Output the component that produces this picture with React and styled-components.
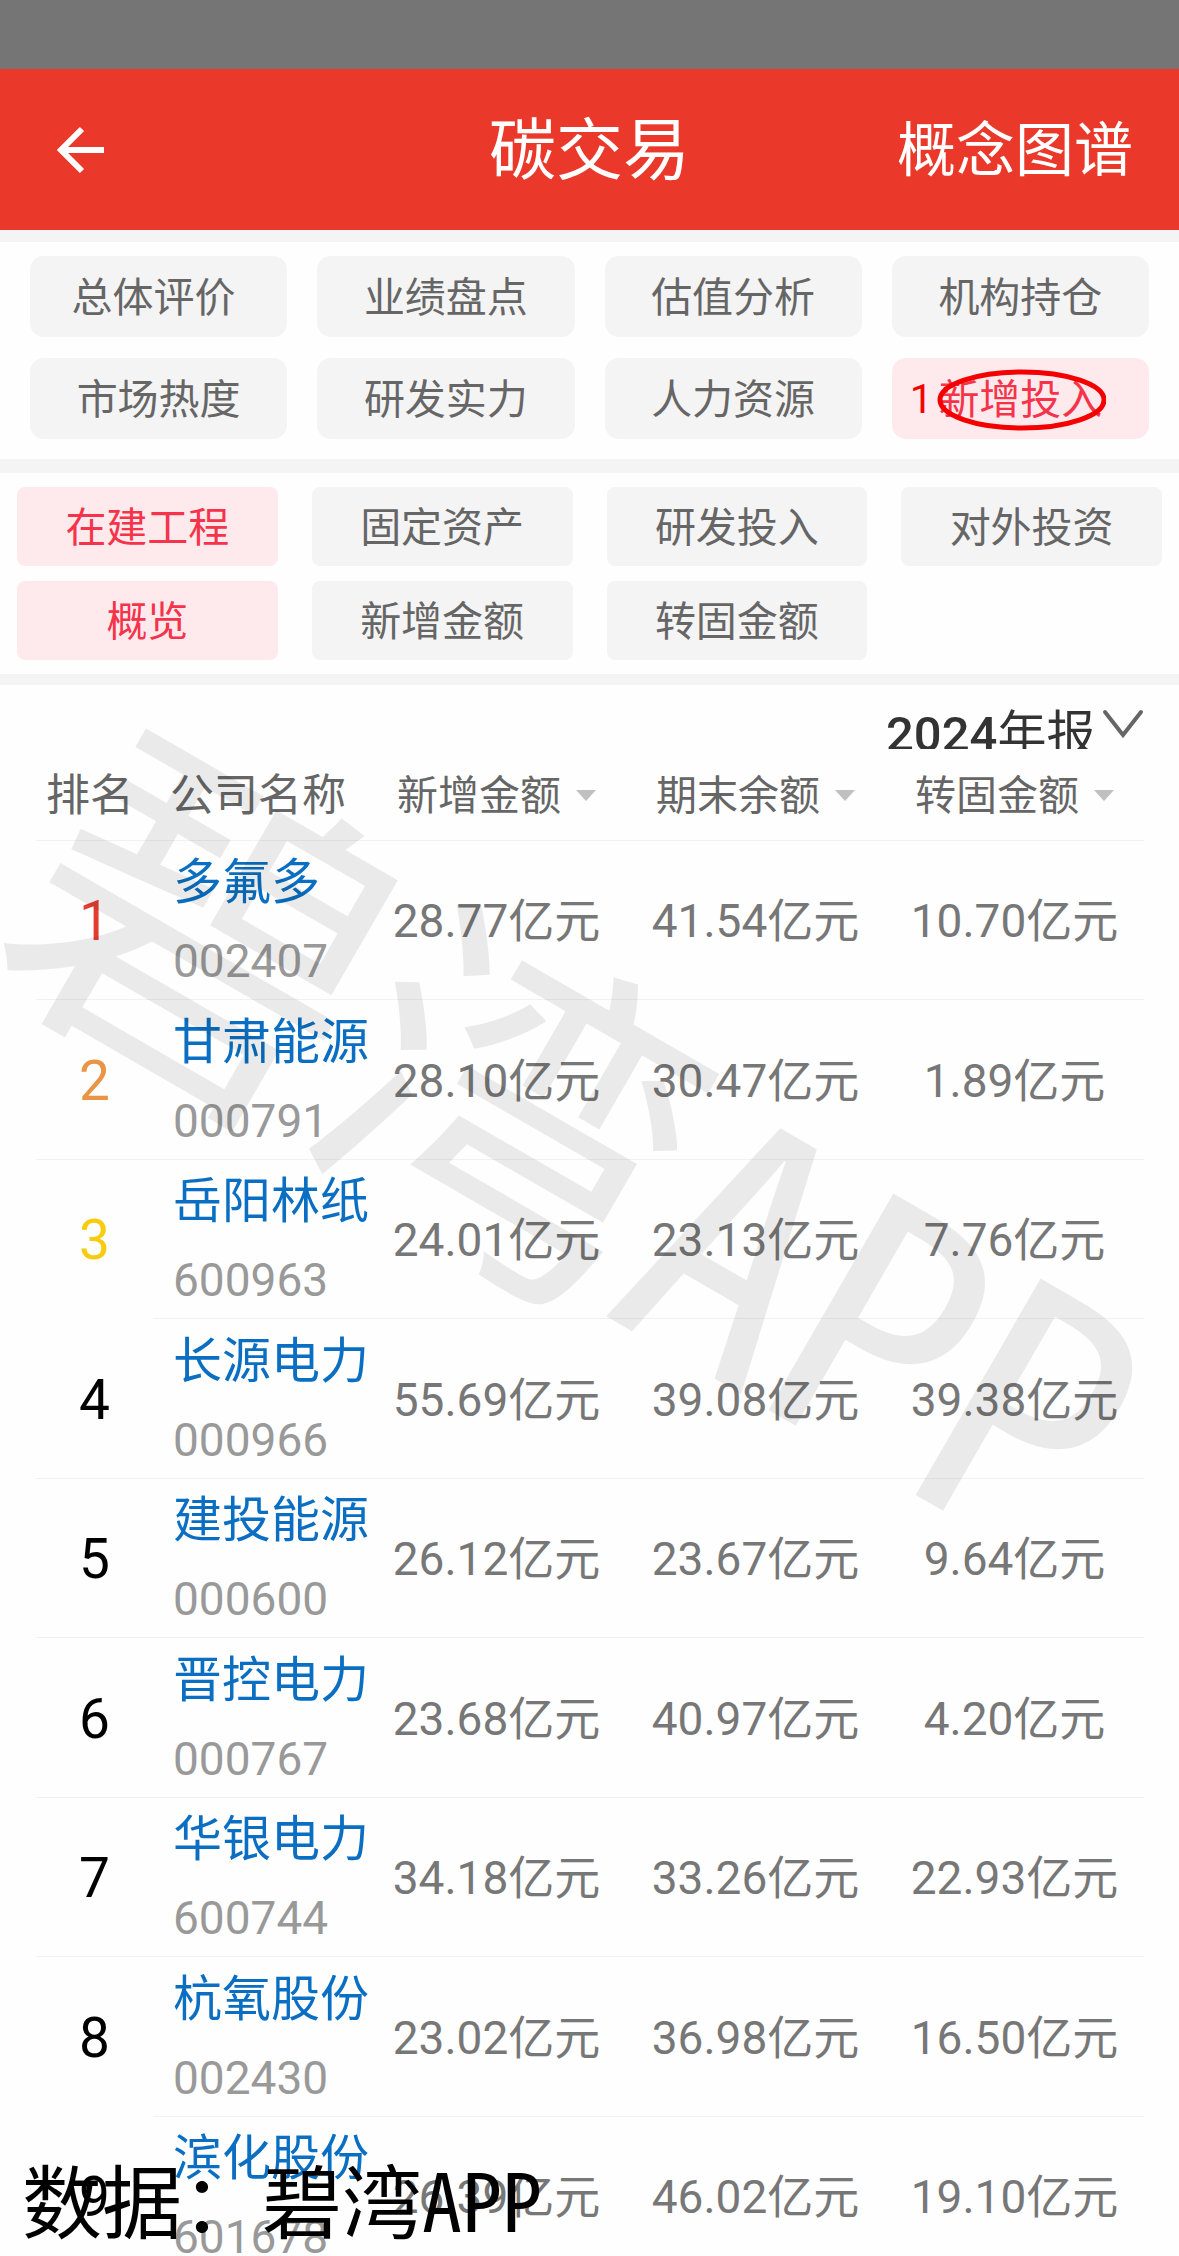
import React, { useState } from "react";
import styled, { createGlobalStyle } from "styled-components";

const RED = "#ea392a";
const ACTIVE = "#f5334a";
const ACTIVE_BG = "#feeaed";
const GREY_BG = "#f4f4f4";
const LINE = "#f1f1f1";

const RANK_COLORS = { 1: "#e43d30", 2: "#ea9446", 3: "#f8cb0c" };

const CATEGORIES = [
  "总体评价 ",
  "业绩盘点",
  "估值分析",
  "机构持仓",
  "市场热度",
  "研发实力",
  "人力资源",
  "新增投入",
];

const SUBJECTS = ["在建工程", "固定资产", "研发投入", "对外投资"];
const METRICS = ["概览", "新增金额", "转固金额"];
const COLUMNS = ["新增金额", "期末余额", "转固金额"];

const COMPANIES = [
  { name: "多氟多", code: "002407", values: ["28.77", "41.54", "10.70"] },
  { name: "甘肃能源", code: "000791", values: ["28.10", "30.47", "1.89"] },
  { name: "岳阳林纸", code: "600963", values: ["24.01", "23.13", "7.76"] },
  { name: "长源电力", code: "000966", values: ["55.69", "39.08", "39.38"] },
  { name: "建投能源", code: "000600", values: ["26.12", "23.67", "9.64"] },
  { name: "晋控电力", code: "000767", values: ["23.68", "40.97", "4.20"] },
  { name: "华银电力", code: "600744", values: ["34.18", "33.26", "22.93"] },
  { name: "杭氧股份", code: "002430", values: ["23.02", "36.98", "16.50"] },
  { name: "滨化股份", code: "601678", values: ["26.39", "46.02", "19.10"] },
];

const GlobalStyle = createGlobalStyle`
  * {
    box-sizing: border-box;
  }
  body {
    margin: 0;
    background-color: #fefefe;
    font-family: Roboto, "Noto Sans CJK SC", sans-serif;
  }
  button,
  select {
    margin: 0;
    padding: 0;
    border: 0;
    background: none;
    color: inherit;
    font: inherit;
  }
`;

const Screen = styled.div`
  position: relative;
  display: flex;
  flex-direction: column;
  height: 100vh;
  overflow: hidden;
`;

const StatusBar = styled.div`
  flex: none;
  height: 69px;
  background-color: #757575;
`;

const Header = styled.header`
  flex: none;
  display: grid;
  grid-template-columns: 1fr auto 1fr;
  align-items: center;
  height: 161px;
  padding: 2px 46px 0;
  background-color: ${RED};
  color: #fff;
`;

const BackButton = styled.button`
  justify-self: start;
  display: flex;
  padding-left: 10px;
`;

const Title = styled.h1`
  margin: 0;
  font-size: 67px;
  font-weight: 400;
  line-height: 80px;
`;

const HeaderLink = styled.a`
  justify-self: end;
  color: inherit;
  font-size: 59px;
  line-height: 80px;
  text-decoration: none;
`;

const Divider = styled.div`
  flex: none;
  height: ${(props) => props.$size}px;
  background-color: ${GREY_BG};
`;

const CategoryNav = styled.nav`
  flex: none;
  display: grid;
  grid-template-columns: repeat(4, 1fr);
  gap: 21px 30px;
  padding: 14px 30px 20px;
`;

const FilterNav = styled.nav`
  flex: none;
  display: grid;
  grid-template-columns: repeat(4, 1fr);
  gap: 15px 34px;
  padding: 14px 17px;
`;

const Pill = styled.button`
  position: relative;
  height: ${(props) => (props.$large ? 81 : 79)}px;
  padding-top: 2px;
  border-radius: ${(props) => (props.$large ? 14 : 8)}px;
  background-color: ${(props) => (props.$active ? ACTIVE_BG : GREY_BG)};
  color: ${(props) => (props.$active ? ACTIVE : "#666")};
  font-size: 41px;
  line-height: 60px;
  white-space: pre;
`;

const FirstMetric = styled(Pill)`
  grid-column-start: 1;
`;

const Mark = styled.span`
  position: absolute;
  inset: 0;
  display: flex;
  align-items: center;
  justify-content: center;
`;

const MarkNumber = styled.span`
  position: absolute;
  left: 18px;
  color: #f50000;
  font-size: 41px;
`;

const ReportBar = styled.div`
  flex: none;
  display: flex;
  justify-content: flex-end;
  height: 64px;
  padding: 20px 35px 0 0;
  overflow: hidden;
`;

const ReportPicker = styled.label`
  display: flex;
  align-items: flex-start;
  gap: 6px;
  color: #333;

  svg {
    margin-top: 3px;
  }
`;

const ReportSelect = styled.select`
  appearance: none;
  height: 60px;
  font-family: "Roboto Medium", Roboto, "Noto Sans CJK SC", sans-serif;
  font-size: 49px;
  line-height: 60px;
`;

const TableWrap = styled.main`
  flex: 1;
  min-height: 0;
  padding: 0 35px 0 36px;
  overflow: hidden;
`;

const Table = styled.table`
  width: 100%;
  border-collapse: separate;
  border-spacing: 0;
  table-layout: fixed;
`;

const HeadCell = styled.th`
  width: ${(props) => props.$width || "auto"};
  height: 92px;
  padding: 2px 0 0 ${(props) => props.$indent || 0}px;
  border-bottom: 1px solid ${LINE};
  color: #666;
  font-size: 44px;
  font-weight: 400;
  line-height: 60px;
  text-align: left;
  white-space: nowrap;
`;

const SortButton = styled.button`
  display: flex;
  align-items: center;
  justify-content: center;
  gap: 15px;
  width: 100%;
  font-size: 41px;
`;

const Caret = styled.span`
  border: 10px solid transparent;
  border-top: 11px solid #c0c0c0;
  border-bottom: 0;
`;

const Row = styled.tr`
  height: 159px;

  &:nth-child(even) {
    height: 160px;
  }
`;

const Cell = styled.td`
  padding: 2px 0 0;
  border-bottom: 1px solid ${LINE};
  color: #777;
  font-size: 46px;
  line-height: 60px;
  text-align: center;
  white-space: nowrap;
`;

const RankCell = styled(Cell)`
  border-bottom-color: ${(props) => (props.$open ? "transparent" : LINE)};
  color: ${(props) => props.$color};
  font-size: 55px;
`;

const NameCell = styled(Cell)`
  padding-left: 20px;
  text-align: left;
`;

const Company = styled.a`
  display: block;
  color: #0a6fc2;
  font-size: 49px;
  line-height: 80px;
  text-decoration: none;
`;

const Code = styled.span`
  display: block;
  color: #999;
  font-size: 46px;
  line-height: 76px;
`;

const Watermark = styled.div`
  position: absolute;
  inset: 0;
  display: flex;
  align-items: center;
  justify-content: center;
  color: rgba(0, 0, 0, 0.08);
  font-family: "Noto Sans Mono CJK SC", "Noto Sans CJK SC", sans-serif;
  font-size: 356px;
  font-weight: 500;
  line-height: 1;
  white-space: nowrap;
  pointer-events: none;
`;

const WatermarkText = styled.span`
  transform: rotate(30deg);

  small {
    font-size: 340px;
  }
`;

const Source = styled.p`
  position: absolute;
  left: 22px;
  bottom: 19px;
  margin: 0;
  color: #000;
  font-family: "Noto Sans Mono CJK SC", "Noto Sans CJK SC", sans-serif;
  font-size: 80px;
  line-height: 80px;
  white-space: nowrap;
`;

function BackIcon() {
  return (
    <svg width="50" height="50" viewBox="0 0 50 50" fill="none">
      <path
        d="M48 24H6M26 3L5 24l21 21"
        stroke="#fff"
        strokeWidth="6"
      />
    </svg>
  );
}

function ChevronIcon() {
  return (
    <svg width="42" height="32" viewBox="0 0 42 32" fill="none">
      <path
        d="M3 4l18 23L39 4"
        stroke="#666"
        strokeWidth="4"
        strokeLinecap="round"
      />
    </svg>
  );
}

function CategoryMark() {
  return (
    <Mark>
      <MarkNumber>1</MarkNumber>
      <svg width="172" height="64" viewBox="0 0 172 64" fill="none">
        <ellipse
          cx="88"
          cy="33"
          rx="82"
          ry="28"
          stroke="#f50000"
          strokeWidth="5"
        />
      </svg>
    </Mark>
  );
}

function RankTable() {
  return (
    <Table>
      <thead>
        <tr>
          <HeadCell $width="117px" $indent={10}>
            排名
          </HeadCell>
          <HeadCell $width="214px" $indent={17}>
            公司名称
          </HeadCell>
          {COLUMNS.map((column) => (
            <HeadCell key={column}>
              <SortButton type="button">
                {column}
                <Caret />
              </SortButton>
            </HeadCell>
          ))}
        </tr>
      </thead>
      <tbody>
        {COMPANIES.map((company, index) => {
          const rank = index + 1;
          return (
            <Row key={company.code}>
              <RankCell
                $color={RANK_COLORS[rank] || "#000"}
                $open={rank % 5 === 3}
              >
                {rank}
              </RankCell>
              <NameCell>
                <Company href={`#${company.code}`}>{company.name}</Company>
                <Code>{company.code}</Code>
              </NameCell>
              {company.values.map((value, i) => (
                <Cell key={COLUMNS[i]}>{value}亿元</Cell>
              ))}
            </Row>
          );
        })}
      </tbody>
    </Table>
  );
}

function App() {
  const [category, setCategory] = useState("新增投入");
  const [subject, setSubject] = useState("在建工程");
  const [metric, setMetric] = useState("概览");
  return (
    <Screen lang="zh-CN">
      <GlobalStyle />
      <StatusBar />
      <Header>
        <BackButton type="button" aria-label="返回">
          <BackIcon />
        </BackButton>
        <Title>碳交易</Title>
        <HeaderLink href="#map">概念图谱</HeaderLink>
      </Header>
      <Divider $size={12} />
      <CategoryNav>
        {CATEGORIES.map((item) => (
          <Pill
            key={item}
            type="button"
            $large
            $active={item === category}
            onClick={() => setCategory(item)}
          >
            {item}
            {item === "新增投入" && <CategoryMark />}
          </Pill>
        ))}
      </CategoryNav>
      <Divider $size={14} />
      <FilterNav>
        {SUBJECTS.map((item) => (
          <Pill
            key={item}
            type="button"
            $active={item === subject}
            onClick={() => setSubject(item)}
          >
            {item}
          </Pill>
        ))}
        {METRICS.map((item, index) => {
          const Item = index === 0 ? FirstMetric : Pill;
          return (
            <Item
              key={item}
              type="button"
              $active={item === metric}
              onClick={() => setMetric(item)}
            >
              {item}
            </Item>
          );
        })}
      </FilterNav>
      <Divider $size={11} />
      <ReportBar>
        <ReportPicker>
          <ReportSelect aria-label="报告期" defaultValue="2024">
            <option value="2024">2024年报</option>
          </ReportSelect>
          <ChevronIcon />
        </ReportPicker>
      </ReportBar>
      <TableWrap>
        <RankTable />
      </TableWrap>
      <Watermark aria-hidden="true">
        <WatermarkText>
          碧湾<small>APP</small>
        </WatermarkText>
      </Watermark>
      <Source>数据：碧湾APP</Source>
    </Screen>
  );
}

export default App;
